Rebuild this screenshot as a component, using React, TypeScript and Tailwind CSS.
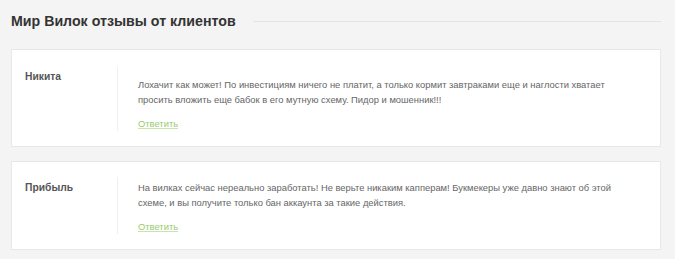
export default function App() {
  const font = { fontFamily: '"Liberation Sans", Arial, sans-serif' };
  return (
    <div className="w-[675px] h-[259px] bg-[#f4f4f4] pl-[11px] pr-[14px] pt-[12px]" style={font}>
      <div className="flex items-center h-[18px]">
        <h1 className="text-[14.2px] font-bold text-[#333] leading-[18px] whitespace-nowrap">Мир Вилок отзывы от клиентов</h1>
        <div className="flex-1 ml-[17px] h-px bg-[#e4e4e4] mt-[1px]" />
      </div>
      <div className="mt-[19px] bg-white border border-[#e8e8e8] flex pt-[17px] pb-[15px]">
        <div className="w-[105px] shrink-0 pl-[13px] pt-[2px] text-[10.3px] font-bold text-[#555] leading-[15px]">Никита</div>
        <div className="border-l border-[#f0f0f0] pl-[20px] pt-[10px]">
          <p className="w-[482px] text-[9.4px] leading-[15px] text-[#666]">
            Лохачит как может! По инвестициям ничего не платит, а только кормит завтраками еще и наглости хватает просить вложить еще бабок в его мутную схему. Пидор и мошенник!!!
          </p>
          <a className="block mt-[10px] text-[9.4px] leading-[14px] text-[#9acb6a] underline decoration-[#c9e4ae]">Ответить</a>
        </div>
      </div>
      <div className="mt-[14px] bg-white border border-[#e8e8e8] flex pt-[15px] pb-[15px]">
        <div className="w-[105px] shrink-0 pl-[13px] pt-[3px] text-[10.3px] font-bold text-[#555] leading-[15px]">Прибыль</div>
        <div className="border-l border-[#f0f0f0] pl-[20px] pt-[3px]">
          <p className="w-[482px] text-[9.4px] leading-[15px] text-[#666]">
            На вилках сейчас нереально заработать! Не верьте никаким капперам! Букмекеры уже давно знают об этой схеме, и вы получите только бан аккаунта за такие действия.
          </p>
          <a className="block mt-[10px] text-[9.4px] leading-[14px] text-[#9acb6a] underline decoration-[#c9e4ae]">Ответить</a>
        </div>
      </div>
    </div>
  );
}
